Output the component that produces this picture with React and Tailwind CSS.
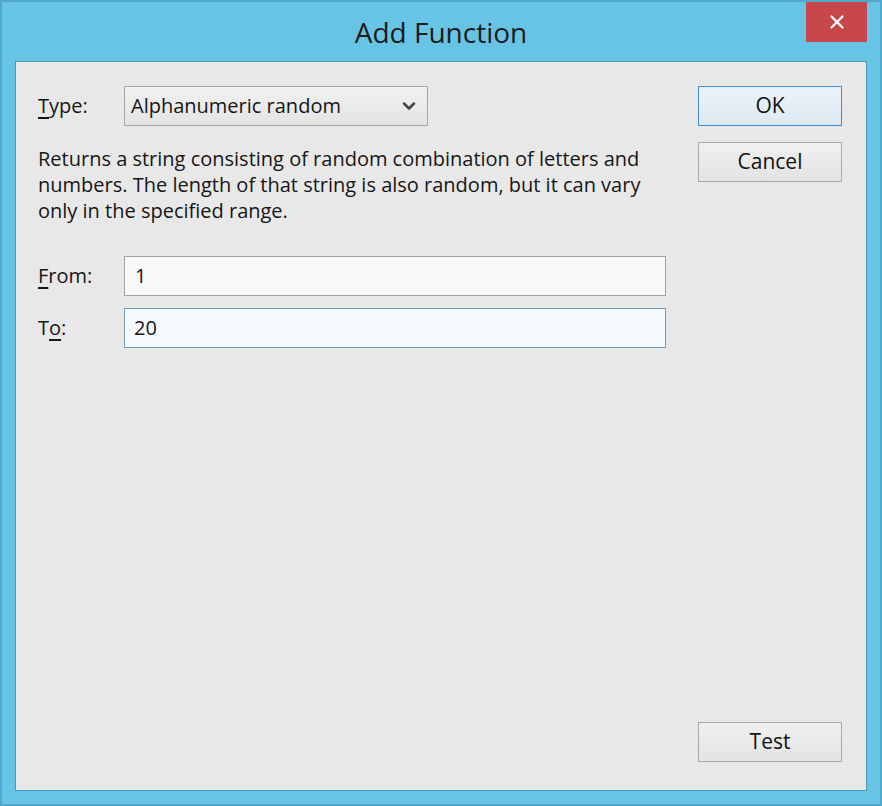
import { ChevronDown, X } from 'lucide-react';

function Btn({ children, primary }) {
  return (
    <button
      className={
        primary
          ? 'w-[144px] h-[40px] border border-[#3c8fd0] bg-gradient-to-b from-[#eaf3fa] to-[#dde8f1] text-[21px] text-[#111]'
          : 'w-[144px] h-[40px] border border-[#a8a8a8] bg-gradient-to-b from-[#f0f0f0] to-[#e3e3e3] text-[21px] text-[#111]'
      }
    >
      {children}
    </button>
  );
}

export default function App() {
  return (
    <div
      className="w-[882px] h-[806px] bg-[#68c4e4] border-2 border-[#4ea9cc] flex flex-col"
      style={{ fontFamily: '"Open Sans", "Noto Sans", sans-serif' }}
    >
      {/* Title bar */}
      <div className="h-[59px] flex items-start relative">
        <div className="flex-1 text-center text-[28px] text-[#1c1c1c] pt-[9px]">Add Function</div>
        <div className="absolute right-[13px] top-0 w-[61px] h-[40px] bg-[#c7474b] flex items-center justify-center">
          <X size={22} color="#fff" strokeWidth={2.5} />
        </div>
      </div>

      {/* Client area */}
      <div className="mx-[13px] mb-[13px] flex-1 bg-[#e8e8e8] border border-[#4a98b8] flex pl-[22px] pr-[24px] pt-[24px] pb-[28px] text-[#161616]">
        <div className="flex-1 mr-[32px] flex flex-col">
          <div className="flex items-center h-[40px]">
            <span className="w-[86px] text-[20px]">
              <span className="underline underline-offset-4">T</span>ype:
            </span>
            <div className="w-[304px] h-[40px] border border-[#a5a5a5] bg-gradient-to-b from-[#f1f1f1] to-[#e4e4e4] flex items-center pl-[6px] pr-[8px] text-[20px]">
              <span className="flex-1">Alphanumeric random</span>
              <ChevronDown size={20} color="#444" strokeWidth={3} />
            </div>
          </div>

          <p className="mt-[20px] text-[20px] leading-[26px]">
            Returns a string consisting of random combination of letters and numbers. The length of that string is also random, but it can vary only in the specified range.
          </p>

          <div className="mt-[32px] flex items-center h-[40px]">
            <span className="w-[86px] text-[20px]">
              <span className="underline underline-offset-4">F</span>rom:
            </span>
            <div className="flex-1 h-[40px] border border-[#a3a3a3] bg-[#f8f8f8] flex items-center pl-[10px] text-[20px]">1</div>
          </div>
          <div className="mt-[12px] flex items-center h-[40px]">
            <span className="w-[86px] text-[20px]">
              T<span className="underline underline-offset-4">o</span>:
            </span>
            <div className="flex-1 h-[40px] border border-[#6e9ab8] bg-[#f7fafc] flex items-center pl-[9px] text-[20px]">20</div>
          </div>
        </div>

        <div className="flex flex-col">
          <Btn primary>OK</Btn>
          <div className="mt-[16px]">
            <Btn>Cancel</Btn>
          </div>
          <div className="mt-auto">
            <Btn>Test</Btn>
          </div>
        </div>
      </div>
    </div>
  );
}
